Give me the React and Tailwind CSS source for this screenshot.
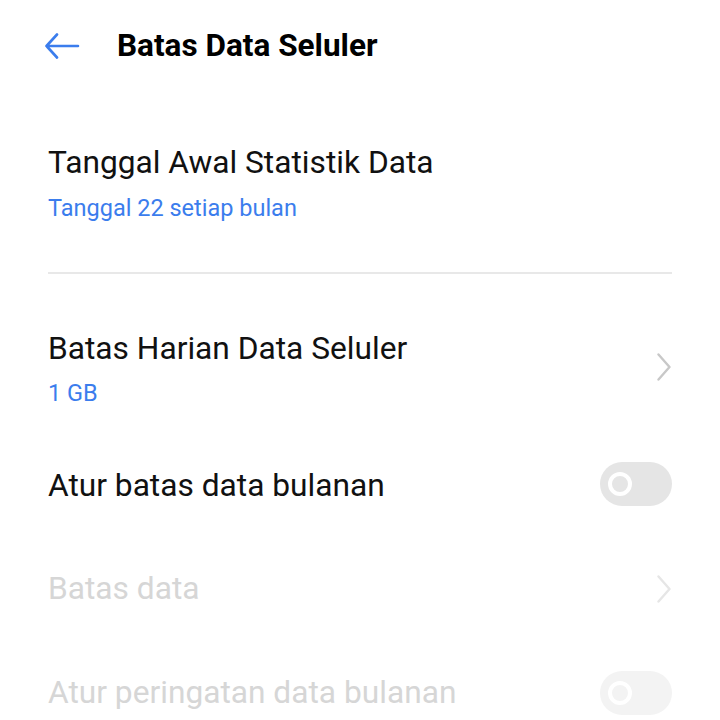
import React from "react";

function Chevron({ color }) {
  return (
    <svg width="16" height="28" viewBox="0 0 16 28" fill="none">
      <path d="M2.5 1.5 L13.5 14 L2.5 26.5" stroke={color} strokeWidth="2.4" strokeLinecap="round" strokeLinejoin="round" />
    </svg>
  );
}

function Toggle({ light }) {
  return (
    <div className={`w-[72px] h-[44px] rounded-full flex items-center pl-[8px] ${light ? "bg-[#f3f3f3]" : "bg-[#e5e5e5]"}`}>
      <div className={`w-[24px] h-[24px] rounded-full border-[4.5px] border-white ${light ? "bg-[#f3f3f3]" : "bg-[#e5e5e5]"}`} />
    </div>
  );
}

export default function App() {
  return (
    <div className="w-[720px] h-[720px] bg-white overflow-hidden" style={{ fontFamily: "Roboto, sans-serif" }}>
      <div className="flex items-center h-[92px] pl-[44px]">
        <svg width="36" height="26" viewBox="0 0 36 26" fill="none">
          <path d="M34 13 H2.5 M13 1.5 L2.5 13 L13 24.5" stroke="#3b7ded" strokeWidth="2.6" strokeLinecap="round" strokeLinejoin="round" />
        </svg>
        <div className="ml-[37px] text-[31.5px] font-bold text-black leading-none">Batas Data Seluler</div>
      </div>
      <div className="px-[48px]">
        <div className="pt-[52px] pb-[49px] border-b-2 border-[#e8e8e8]">
          <div className="text-[31.7px] text-[#111] leading-[38px]">Tanggal Awal Statistik Data</div>
          <div className="text-[23.5px] text-[#3b7ded] leading-[30px] mt-[11px]">Tanggal 22 setiap bulan</div>
        </div>
        <div className="flex items-center justify-between pt-[56px]">
          <div>
            <div className="text-[31.7px] text-[#111] leading-[38px]">Batas Harian Data Seluler</div>
            <div className="text-[23.5px] text-[#3b7ded] leading-[30px] mt-[10px]">1 GB</div>
          </div>
          <div className="mb-[5px]"><Chevron color="#c8c8c8" /></div>
        </div>
        <div className="flex items-center justify-between mt-[54px] h-[44px]">
          <div className="text-[31.7px] text-[#111] leading-[38px] mt-[3px]">Atur batas data bulanan</div>
          <Toggle />
        </div>
        <div className="flex items-center justify-between mt-[64px] h-[38px]">
          <div className="text-[31.7px] text-[#d6d6d6] leading-[38px]">Batas data</div>
          <Chevron color="#e6e6e6" />
        </div>
        <div className="flex items-center justify-between mt-[63px] h-[44px]">
          <div className="text-[31.7px] text-[#d6d6d6] leading-[38px]">Atur peringatan data bulanan</div>
          <Toggle light />
        </div>
      </div>
    </div>
  );
}
